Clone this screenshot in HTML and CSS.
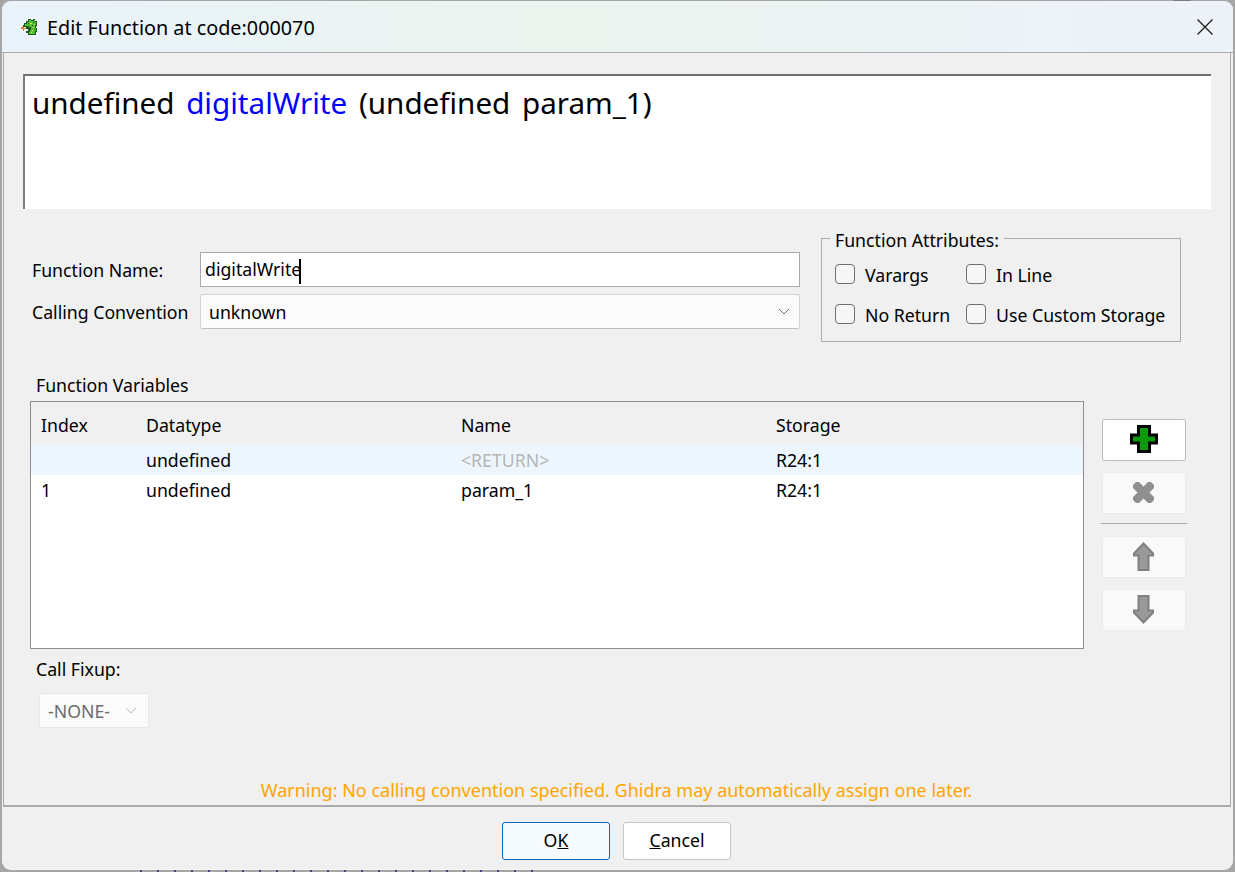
FILE: index.html
```html
<!DOCTYPE html>
<html lang="en">
<head>
<meta charset="utf-8">
<title>Edit Function</title>
<link rel="stylesheet" href="styles.css">
</head>
<body>
<div class="behind-top"></div>
<div class="behind-bottom"></div>
<div class="window">
  <header class="titlebar">
    <svg class="dragon" viewBox="0 0 18 18" width="18" height="18" shape-rendering="crispEdges">
      <path fill="#1c5a1c" d="M8 1h3v1h2V1h2v2h2v5h-1v2h1v4h-1v3H8v-2H6v-2h2v-2H6V9H3V7h1V5h2V3h2z"/>
      <path fill="#52c234" d="M9 2h2v1h3V2h1v2h1v3h-1v3h1v3h-1v3H9v-2h1v-2h1V9H9V8H5V6h2V4h2z"/>
      <path fill="#f3e23a" d="M10 5h2v1h-2zM13 9h1v1h-1zM12 12h1v1h-1zM14 6h1v1h-1zM11 14h1v1h-1z"/>
      <path fill="#1c5a1c" d="M8 5h1v1H8zM13 4h1v1h-1zM14 11h1v1h-1zM12 7h1v1h-1z"/>
      <path fill="#f07a20" d="M1 9h3v1h2v1H4v2H3v-2H1z"/>
    </svg>
    <span class="title-text">Edit Function at code:000070</span>
    <svg class="close" viewBox="0 0 16 16" width="16" height="16"><path d="M.5.5l15 15M15.500.5l-15 15" stroke="#1a1a1a" stroke-width="1.300" fill="none"/></svg>
  </header>
  <main class="panel">
    <div class="signature"><span>undefined </span><span class="fn-name">digitalWrite</span><span> (undefined param_1)</span></div>
    <div class="top-row">
      <div class="form">
        <div class="form-row">
          <label class="form-label">Function Name:</label>
          <div class="input">digitalWrite<span class="caret"></span></div>
        </div>
        <div class="form-row">
          <label class="form-label">Calling Convention</label>
          <div class="combo combo-wide"><span>unknown</span>
            <svg class="chev" viewBox="0 0 12 7" width="12" height="7"><path d="M1 1l5 5 5-5" stroke="#6a6a6a" fill="none"/></svg>
          </div>
        </div>
      </div>
      <div class="group">
        <div class="legend">Function Attributes:</div>
        <div class="checks">
          <div class="check"><span class="box"></span>Varargs</div>
          <div class="check"><span class="box"></span>In Line</div>
          <div class="check"><span class="box"></span>No Return</div>
          <div class="check"><span class="box"></span>Use Custom Storage</div>
        </div>
      </div>
    </div>
    <div class="vars-title">Function Variables</div>
    <div class="vars-row">
      <div class="table">
        <div class="tr th"><div>Index</div><div>Datatype</div><div>Name</div><div>Storage</div></div>
        <div class="tr sel"><div></div><div>undefined</div><div class="muted">&lt;RETURN&gt;</div><div>R24:1</div></div>
        <div class="tr"><div>1</div><div>undefined</div><div>param_1</div><div>R24:1</div></div>
      </div>
      <div class="tools">
        <div class="tool">
          <svg viewBox="0 0 28 28" width="28" height="28"><path fill="#0a9a0a" stroke="#000" stroke-width="3" d="M8.500 1.500h11V10h7v8h-7v8.500h-11V18h-7v-8h7z"/></svg>
        </div>
        <div class="tool off">
          <svg viewBox="0 0 21 21" width="21" height="21"><path fill="#8f8f8f" d="M3 0h3l4.500 4.500L15 0h3l3 3v3l-4.500 4.500L21 15v3l-3 3h-3l-4.500-4.500L6 21H3l-3-3v-3l4.500-4.500L0 6V3z"/></svg>
        </div>
        <div class="tool-sep"></div>
        <div class="tool off">
          <svg viewBox="0 0 21 29" width="21" height="29"><path fill="#999" stroke="#808080" stroke-width="2" d="M10.500 1.500L20 11.500v2h-4.500V28h-10V13.500H1v-2z"/></svg>
        </div>
        <div class="tool off">
          <svg viewBox="0 0 21 29" width="21" height="29"><path fill="#999" stroke="#808080" stroke-width="2" d="M10.500 27.500L20 17.500v-2h-4.500V1h-10v14.500H1v2z"/></svg>
        </div>
      </div>
    </div>
    <div class="fixup-title">Call Fixup:</div>
    <div class="combo combo-small"><span>-NONE-</span>
      <svg class="chev" viewBox="0 0 12 7" width="12" height="7"><path d="M1 1l5 5 5-5" stroke="#bdbdbd" fill="none"/></svg>
    </div>
    <div class="warning">Warning: No calling convention specified. Ghidra may automatically assign one later.</div>
  </main>
  <footer class="footer">
    <div class="btn primary">O<u>K</u></div>
    <div class="btn"><u>C</u>ancel</div>
  </footer>
</div>
</body>
</html>
```
FILE: styles.css
```css
* { box-sizing: border-box; }
html, body { margin: 0; height: 100%; }
body {
  position: relative;
  width: 1235px;
  height: 872px;
  overflow: hidden;
  background: #a6a6a6;
  font-family: "Noto Sans", sans-serif;
  font-size: 17.7px;
  color: #000;
  padding: 1px 2px 3px 2px;
}
.behind-top {
  position: absolute;
  left: 1173px;
  top: 0;
  width: 18px;
  height: 2px;
  background: #7d7d7d;
}
.behind-bottom {
  position: absolute;
  left: 140px;
  bottom: 0;
  width: 405px;
  height: 2px;
  background: repeating-linear-gradient(90deg, #45457a 0 2px, transparent 2px 17px);
}
.window {
  position: relative;
  height: 868px;
  border-radius: 9px;
  overflow: hidden;
  background: #f0f0f0;
  box-shadow: 0 1px 0 #f6f6f6;
  display: flex;
  flex-direction: column;
}
.titlebar {
  height: 52px;
  flex: none;
  display: flex;
  align-items: center;
  padding: 0 20px 0 18px;
  background: linear-gradient(90deg, #e9f3fa 0%, #ecf4ef 45%, #ecf3f4 70%, #edf2fa 100%);
  border-bottom: 1px solid #ababab;
}
.dragon { flex: none; margin-right: 9px; }
.title-text { flex: 1; font-size: 19.8px; padding-top: 2px; }
.close { flex: none; }
.panel {
  height: 754px;
  flex: none;
  margin: 0 2px 0 1px;
  border-left: 1px solid #ababab;
  border-right: 1px solid #ababab;
  border-bottom: 2px solid #ababab;
  padding: 21px 0 0 19px;
  display: flex;
  flex-direction: column;
  align-items: flex-start;
}
.signature {
  width: 1188px;
  height: 135px;
  flex: none;
  background: #fff;
  border-top: 2px solid #6e6e6e;
  border-left: 2px solid #7a7a7a;
  padding: 6px 0 0 7px;
  font-size: 29.6px;
  word-spacing: 4px;
  line-height: 42px;
  white-space: pre;
}
.fn-name { color: #0000ff; }
.top-row { display: flex; margin-top: 29px; }
.form { width: 798px; padding: 14px 0 0 9px; display: flex; flex-direction: column; gap: 7px; }
.form-row { display: flex; align-items: center; height: 35px; }
.form-label { width: 168px; flex: none; }
.input {
  width: 600px;
  height: 35px;
  background: #fff;
  border: 1px solid #a9a9a9;
  padding-left: 4px;
  line-height: 33px;
}
.caret { display: inline-block; width: 2px; height: 25px; background: #000; margin-left: -2px; vertical-align: middle; }
.combo {
  display: flex;
  align-items: center;
  justify-content: space-between;
  background: #fbfbfb;
  border: 1px solid #d4d4d4;
  border-bottom-color: #bdbdbd;
  border-radius: 3px;
}
.combo-wide { width: 600px; height: 35px; padding: 0 9px 0 8px; }
.combo-small {
  width: 110px;
  height: 35px;
  padding: 0 11px 0 8px;
  margin-left: 16px;
  margin-top: 12px;
  color: #6d6d6d;
  border-color: #e6e6e6;
}
.group {
  position: relative;
  width: 360px;
  height: 104px;
  border: 1px solid #ababab;
  padding: 25px 0 0 13px;
  flex: none;
}
.legend {
  position: absolute;
  left: 8px;
  top: -11px;
  padding: 0 5px;
  background: #f0f0f0;
  line-height: 24px;
}
.checks { display: grid; grid-template-columns: 131px auto; row-gap: 18px; }
.check { display: flex; align-items: center; height: 22px; white-space: nowrap; }
.box {
  width: 20px;
  height: 20px;
  flex: none;
  margin: 0 10px 2px 0;
  background: #f6f6f6;
  border: 1px solid #6f6f6f;
  border-radius: 4px;
}
.vars-title { margin: 31px 0 0 13px; line-height: 24px; height: 24px; }
.vars-row { display: flex; margin: 4px 0 0 7px; align-items: flex-start; }
.table {
  width: 1054px;
  height: 248px;
  background: #fff;
  border: 1px solid #8d8d96;
}
.tr {
  display: grid;
  grid-template-columns: 105px 315px 315px 1fr;
  height: 30px;
  padding: 0 0 0 10px;
  align-items: center;
}
.th { height: 43px; background: #f0f0f0; padding: 2px 0 0 10px; }
.sel { background: #eef6fd; }
.muted { color: #b5b5b5; }
.tools { width: 86px; margin-left: 17px; padding-top: 18px; display: flex; flex-direction: column; align-items: center; }
.tool {
  width: 84px;
  height: 42px;
  background: #fff;
  border: 1px solid #bdbdbd;
  border-radius: 3px;
  display: flex;
  align-items: center;
  justify-content: center;
  padding: 0 1px 2px 0;
  margin-bottom: 11px;
}
.tool.off { background: #f9f9f9; border-color: #ececec; }
.tool-sep { width: 86px; height: 1px; background: #aaa; margin: -2px 0 12px; }
.fixup-title { margin: 8px 0 0 13px; line-height: 24px; height: 24px; }
.warning {
  align-self: stretch;
  margin: auto 0 0 -19px;
  padding: 0 1px 3px 0;
  text-align: center;
  font-size: 18px;
  color: #ffa500;
  line-height: 24px;
}
.footer {
  flex: 1;
  display: flex;
  justify-content: center;
  gap: 13px;
  padding: 15px 2px 0 0;
}
.btn {
  width: 108px;
  height: 38px;
  background: #fff;
  border: 1px solid #c4c4c4;
  border-radius: 3px;
  text-align: center;
  line-height: 34px;
}
.btn.primary { background: #f6fbff; border-color: #0a67b5; }
```
